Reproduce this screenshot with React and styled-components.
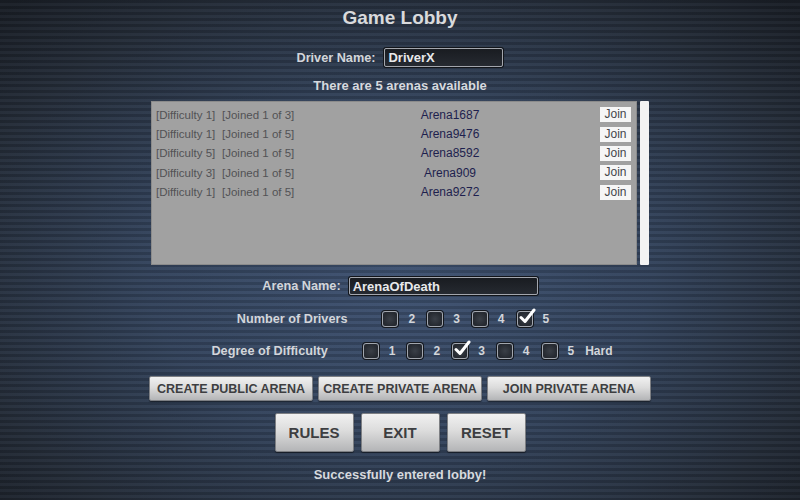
import React from "react";
import styled, { createGlobalStyle } from "styled-components";

const GlobalStyle = createGlobalStyle`
  html, body {
    margin: 0;
    padding: 0;
    background: #1d232c;
  }
  body {
    font-family: "Liberation Sans", Arial, sans-serif;
  }
`;

const Screen = styled.div`
  width: 800px;
  height: 500px;
  overflow: hidden;
  display: flex;
  flex-direction: column;
  align-items: center;
  background:
    repeating-linear-gradient(
      to bottom,
      rgba(0, 0, 0, 0.14) 0px,
      rgba(0, 0, 0, 0.14) 3px,
      rgba(255, 255, 255, 0.02) 3px,
      rgba(255, 255, 255, 0.02) 6px
    ),
    radial-gradient(
      ellipse 70% 75% at 50% 55%,
      #3f5372 0%,
      #34445d 45%,
      #252d39 80%,
      #1b2028 100%
    );
  color: #d4d7dc;
`;

const Title = styled.h1`
  margin: 7px 0 0;
  font-size: 19px;
  line-height: 22px;
  font-weight: bold;
  color: #d9dadc;
`;

const FieldRow = styled.div`
  display: flex;
  align-items: center;
  gap: ${({ gap }) => gap}px;
  margin-top: ${({ top }) => top}px;
`;

const Label = styled.span`
  font-size: 12.7px;
  font-weight: bold;
  color: #d2d5da;
  white-space: nowrap;
`;

const TextBox = styled.div`
  box-sizing: border-box;
  width: ${({ width }) => width}px;
  height: ${({ height }) => height}px;
  padding: 0 3px;
  display: flex;
  align-items: center;
  border: 1px solid #a3a6ad;
  border-radius: 2px;
  box-shadow: 0 0 0 1px #12151a;
  background: linear-gradient(to bottom, #191c21, #262a31);
  font-size: 13px;
  font-weight: bold;
  color: #e8e9eb;
`;

const Notice = styled.div`
  margin-top: ${({ top }) => top}px;
  font-size: 13px;
  line-height: 16px;
  font-weight: bold;
  color: #d6d9de;
`;

const ListArea = styled.div`
  display: flex;
  gap: 3px;
  margin-top: 7px;
  height: 164px;
`;

const ArenaList = styled.div`
  box-sizing: border-box;
  width: 486px;
  height: 100%;
  padding: 3px 5px 0 4px;
  background: #a1a1a1;
  border: 1px solid #8b8b8b;
`;

const ScrollThumb = styled.div`
  width: 9px;
  height: 100%;
  background: #f3f3f3;
  border-radius: 1px;
`;

const ArenaRow = styled.div`
  display: grid;
  grid-template-columns: 66px 110px 236px 1fr 31px;
  align-items: center;
  height: 19.4px;
  font-size: 11.5px;
`;

const Meta = styled.span`
  color: #525255;
  white-space: nowrap;
`;

const ArenaName = styled.span`
  text-align: center;
  font-size: 12px;
  color: #1e1f4e;
`;

const JoinButton = styled.button`
  grid-column: 5;
  height: 15px;
  padding: 0;
  border: none;
  background: #f6f6f6;
  font-family: inherit;
  font-size: 12px;
  line-height: 15px;
  color: #45464a;
`;

const OptionRow = styled.div`
  display: flex;
  align-items: center;
  margin-top: 16px;
  height: 16px;
  padding-left: ${({ shiftLeft }) => shiftLeft || 0}px;
  padding-right: ${({ shiftRight }) => shiftRight || 0}px;
`;

const Options = styled.div`
  display: flex;
  align-items: center;
  gap: 12px;
  margin-left: 35px;
`;

const Option = styled.label`
  display: flex;
  align-items: center;
  gap: 10px;
  font-size: 12px;
  font-weight: bold;
  color: #d2d5da;
`;

const Box = styled.span`
  position: relative;
  box-sizing: border-box;
  width: 16px;
  height: 16px;
  border: 1.5px solid #a2a6ad;
  border-radius: 3px;
  box-shadow: 0 0 0 1px #15181d;
  background: radial-gradient(circle at 50% 50%, #3a3f47 0%, #262a31 70%);
`;

const Tick = styled.svg`
  position: absolute;
  left: 0px;
  top: -5px;
  width: 18px;
  height: 18px;
`;

const Hard = styled.span`
  margin-left: 11px;
  font-size: 12px;
  font-weight: bold;
  color: #d2d5da;
`;

const ButtonRow = styled.div`
  display: flex;
  gap: ${({ gap }) => gap}px;
  margin-top: ${({ top }) => top}px;
`;

const GreyButton = styled.button`
  box-sizing: border-box;
  width: ${({ wide }) => (wide ? 164 : 79)}px;
  height: ${({ wide }) => (wide ? 25 : 39)}px;
  padding: 0;
  border: 1px solid #7d7f83;
  border-radius: 2px;
  background: linear-gradient(to bottom, #f1f1f1 0%, #dcdcdc 45%, #b4b5b7 100%);
  box-shadow: 0 1px 1px rgba(0, 0, 0, 0.5);
  font-family: inherit;
  font-size: ${({ wide }) => (wide ? 12.5 : 15)}px;
  font-weight: bold;
  color: #3d3e41;
  white-space: nowrap;
`;

const arenas = [
  { difficulty: 1, joined: 1, max: 3, name: "Arena1687" },
  { difficulty: 1, joined: 1, max: 5, name: "Arena9476" },
  { difficulty: 5, joined: 1, max: 5, name: "Arena8592" },
  { difficulty: 3, joined: 1, max: 5, name: "Arena909" },
  { difficulty: 1, joined: 1, max: 5, name: "Arena9272" },
];

function CheckBox({ checked, children }) {
  return (
    <Option>
      <Box>
        {checked && (
          <Tick viewBox="0 0 18 18">
            <path
              d="M3 10.5 L7 14.5 L16 3"
              fill="none"
              stroke="#ffffff"
              strokeWidth="3"
              strokeLinecap="round"
              strokeLinejoin="round"
            />
          </Tick>
        )}
      </Box>
      {children}
    </Option>
  );
}

export default function App() {
  const drivers = 5;
  const difficulty = 3;

  return (
    <Screen>
      <GlobalStyle />
      <Title>Game Lobby</Title>

      <FieldRow top={19} gap={9}>
        <Label>Driver Name:</Label>
        <TextBox width={119} height={19}>DriverX</TextBox>
      </FieldRow>

      <Notice top={11}>There are {arenas.length} arenas available</Notice>

      <ListArea>
        <ArenaList>
          {arenas.map((a) => (
            <ArenaRow key={a.name}>
              <Meta>[Difficulty {a.difficulty}]</Meta>
              <Meta>
                [Joined {a.joined} of {a.max}]
              </Meta>
              <ArenaName>{a.name}</ArenaName>
              <JoinButton>Join</JoinButton>
            </ArenaRow>
          ))}
        </ArenaList>
        <ScrollThumb />
      </ListArea>

      <FieldRow top={12} gap={8}>
        <Label>Arena Name:</Label>
        <TextBox width={189} height={18}>ArenaOfDeath</TextBox>
      </FieldRow>

      <OptionRow shiftRight={14}>
        <Label>Number of Drivers</Label>
        <Options>
          {[2, 3, 4, 5].map((n) => (
            <CheckBox key={n} checked={n === drivers}>
              {n}
            </CheckBox>
          ))}
        </Options>
      </OptionRow>

      <OptionRow shiftLeft={24}>
        <Label>Degree of Difficulty</Label>
        <Options>
          {[1, 2, 3, 4, 5].map((n) => (
            <CheckBox key={n} checked={n === difficulty}>
              {n}
            </CheckBox>
          ))}
        </Options>
        <Hard>Hard</Hard>
      </OptionRow>

      <ButtonRow top={17} gap={5}>
        <GreyButton wide>CREATE PUBLIC ARENA</GreyButton>
        <GreyButton wide>CREATE PRIVATE ARENA</GreyButton>
        <GreyButton wide>JOIN PRIVATE ARENA</GreyButton>
      </ButtonRow>

      <ButtonRow top={12} gap={7}>
        <GreyButton>RULES</GreyButton>
        <GreyButton>EXIT</GreyButton>
        <GreyButton>RESET</GreyButton>
      </ButtonRow>

      <Notice top={15}>Successfully entered lobby!</Notice>
    </Screen>
  );
}
